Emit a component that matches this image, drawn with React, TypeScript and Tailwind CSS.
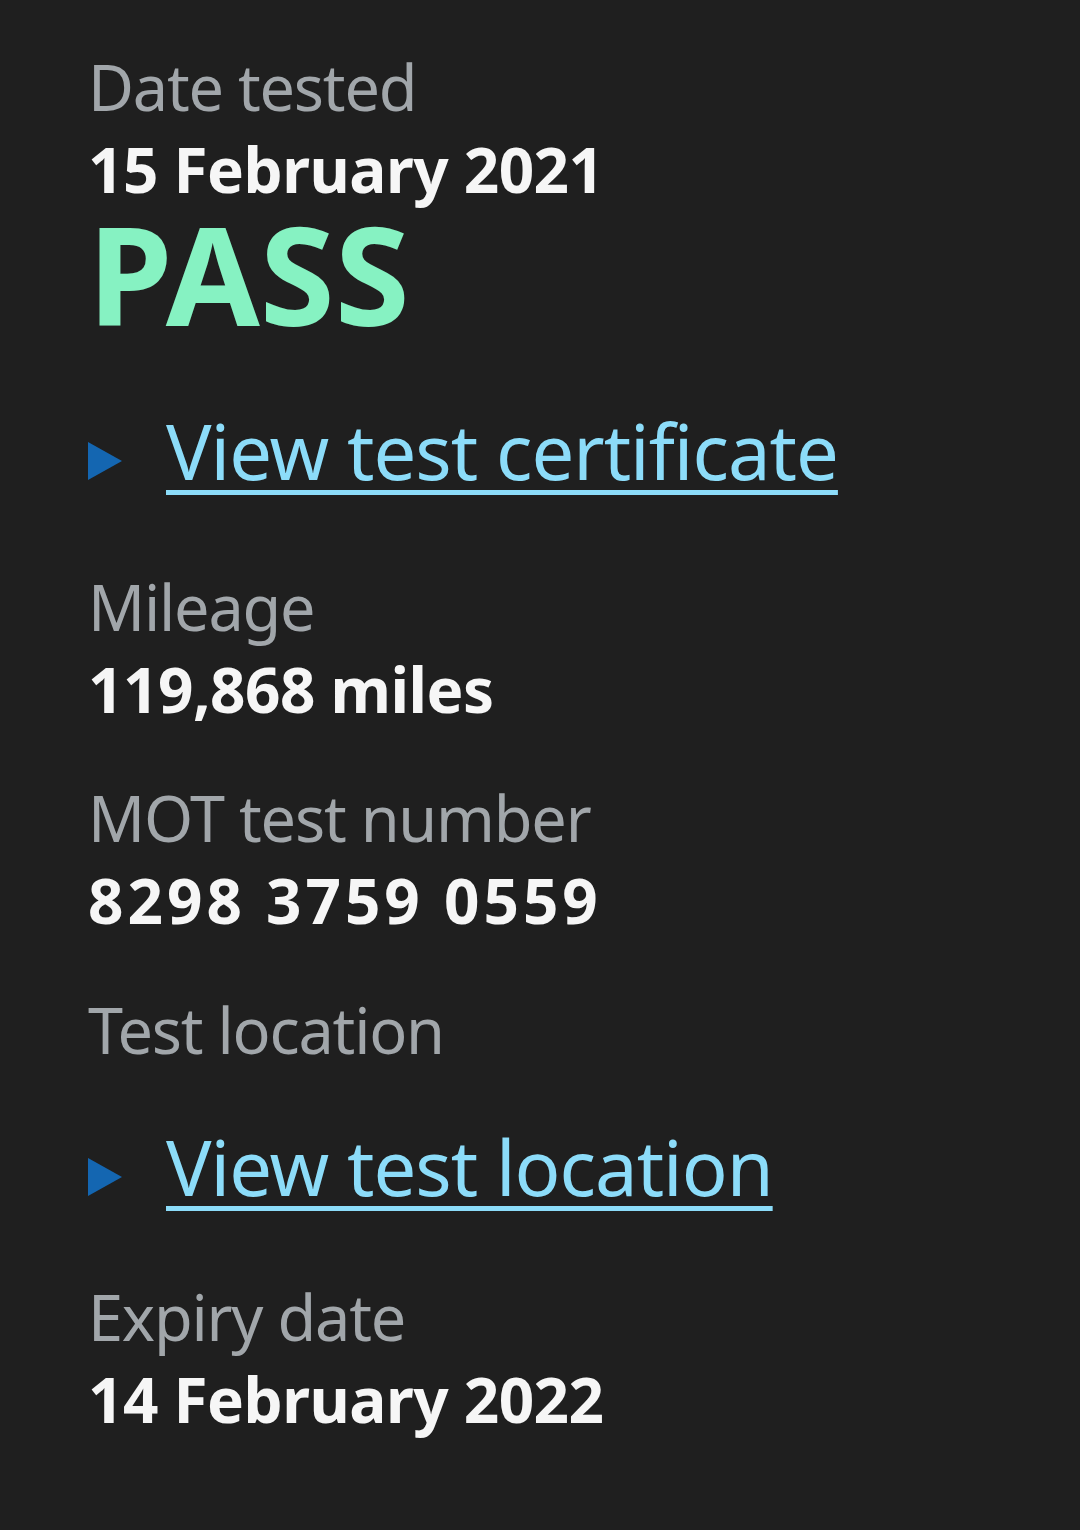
import type { ReactNode } from 'react';

const font = { fontFamily: '"Noto Sans", Arial, sans-serif' };

function Label({ children }: { children: ReactNode }) {
  return <p className="text-[63px] leading-[83px] tracking-[-1.2px] text-[#a1a6aa]">{children}</p>;
}

function Value({ children, wide }: { children: ReactNode; wide?: boolean }) {
  return (
    <p
      className={
        wide
          ? 'text-[62px] font-bold leading-[83px] tracking-[4px] text-[#f6f6f6]'
          : 'text-[62px] font-bold leading-[83px] tracking-[-0.5px] text-[#f6f6f6]'
      }
    >
      {children}
    </p>
  );
}

function DetailLink({ children }: { children: ReactNode }) {
  return (
    <div className="flex items-center gap-[44px]">
      <svg width="34" height="38" viewBox="0 0 34 38" className="mt-[20px] shrink-0">
        <polygon points="0,0 34,19 0,38" fill="#1466b1" />
      </svg>
      <a
        href="#"
        className="text-[76px] leading-[100px] tracking-[-1px] text-[#8cdcf9] underline decoration-[5px] underline-offset-[10px]"
      >
        {children}
      </a>
    </div>
  );
}

export default function App() {
  return (
    <div className="min-h-[1530px] bg-[#1f1f1f] px-[88px] pt-[45px]" style={font}>
      <Label>Date tested</Label>
      <Value>15 February 2021</Value>
      <p className="text-[136px] font-bold leading-[125px] text-[#86f2c2]">PASS</p>

      <div className="mt-[65px]">
        <DetailLink>View test certificate</DetailLink>
      </div>

      <div className="mt-[64px]">
        <Label>Mileage</Label>
        <Value>119,868 miles</Value>
      </div>

      <div className="mt-[45px]">
        <Label>MOT test number</Label>
        <Value wide>8298 3759 0559</Value>
      </div>

      <div className="mt-[46px]">
        <Label>Test location</Label>
      </div>

      <div className="mt-[46px]">
        <DetailLink>View test location</DetailLink>
      </div>

      <div className="mt-[58px]">
        <Label>Expiry date</Label>
        <Value>14 February 2022</Value>
      </div>
    </div>
  );
}
